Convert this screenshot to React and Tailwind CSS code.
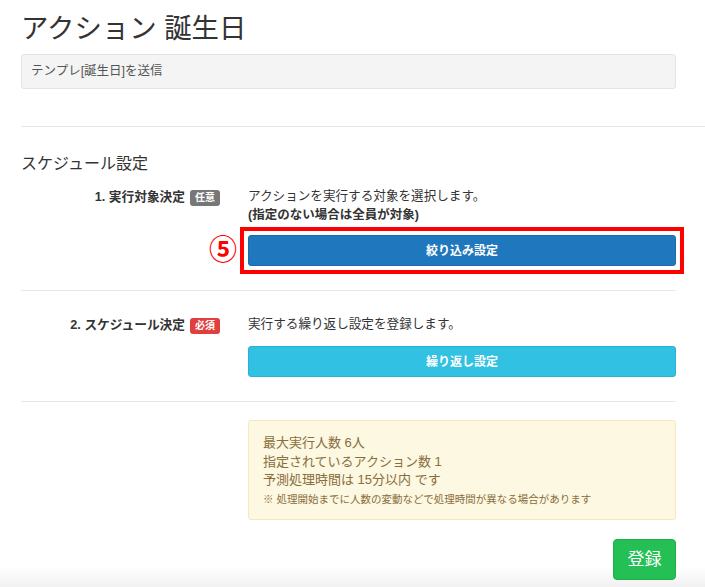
import React from "react";

const font = { fontFamily: '"Liberation Sans", "Noto Sans CJK JP", sans-serif' };

function Badge({ children, tone }) {
  const color = tone === "red" ? "bg-[#e0403d]" : "bg-[#777777]";
  return (
    <span
      className={`${color} ml-[5px] inline-flex h-[16px] items-center rounded-[3px] px-[5px] text-[10px] font-bold leading-none text-white`}
    >
      {children}
    </span>
  );
}

function Row({ label, badge, tone, children }) {
  return (
    <div className="grid grid-cols-[227px_428px]">
      <div className="flex h-[19px] items-center justify-end pr-[28px] pt-[3px] text-[12.7px] font-bold text-[#333]">
        {label}
        <Badge tone={tone}>{badge}</Badge>
      </div>
      <div>{children}</div>
    </div>
  );
}

export default function App() {
  return (
    <div
      style={font}
      className="h-[587px] overflow-hidden bg-[linear-gradient(to_bottom,#ffffff_567px,#f1f1f1_587px)] pl-[21px] text-[#333]"
    >
      {/* ===== HEADER ===== */}
      <h1 className="pt-[11px] text-[27.4px] font-normal leading-[36px] text-[#333]">
        アクション 誕生日
      </h1>
      <div className="mt-[7px] flex h-[35px] w-[655px] items-center rounded-[3px] border border-[#e3e3e3] bg-[#f4f4f4] px-[9px] text-[12.5px] text-[#555]">
        テンプレ[誕生日]を送信
      </div>

      <div className="mt-[37px] border-t border-[#e8e8e8]" />

      {/* ===== SCHEDULE ===== */}
      <h2 className="mt-[25px] text-[16px] font-normal leading-[24px] text-[#333]">
        スケジュール設定
      </h2>

      <div className="mt-[11px]">
        <Row label="1. 実行対象決定" badge="任意">
          <p className="text-[12.6px] leading-[19px] text-[#333]">アクションを実行する対象を選択します。</p>
          <p className="text-[12.5px] font-bold leading-[19px] text-[#333]">(指定のない場合は全員が対象)</p>
          <div className="relative mt-[10px]">
            <button className="flex h-[31px] w-full items-center justify-center rounded-[3px] border border-[#1b6aab] bg-[#1f77bd] text-[12px] font-bold text-white">
              絞り込み設定
            </button>
            <div className="pointer-events-none absolute -inset-[8px] border-[4px] border-[#ff0000]" />
            <span className="absolute right-full top-1/2 mr-[11px] -translate-y-1/2 text-[28px] font-bold leading-none text-[#ff0000]">
              ⑤
            </span>
          </div>
        </Row>
      </div>

      <div className="mt-[24px] w-[655px] border-t border-[#e8e8e8]" />

      <div className="mt-[24px]">
        <Row label="2. スケジュール決定" badge="必須" tone="red">
          <p className="text-[12.6px] leading-[19px] text-[#333]">実行する繰り返し設定を登録します。</p>
          <button className="mt-[12px] flex h-[31px] w-full items-center justify-center rounded-[3px] border border-[#27b3d6] bg-[#31c1e3] text-[12px] font-bold text-white">
            繰り返し設定
          </button>
        </Row>
      </div>

      <div className="mt-[24px] w-[655px] border-t border-[#e8e8e8]" />

      {/* ===== ESTIMATE ===== */}
      <div className="mt-[18px] grid grid-cols-[227px_428px]">
        <div />
        <div className="h-[100px] rounded-[3px] border border-[#f8e6bf] bg-[#fcf8e2] px-[14px] pt-[13px] text-[#8a6d3b]">
          <p className="text-[13px] leading-[18.5px]">最大実行人数 6人</p>
          <p className="text-[13px] leading-[18.5px]">指定されているアクション数 1</p>
          <p className="text-[13px] leading-[18.5px]">予測処理時間は 15分以内 です</p>
          <p className="text-[10.5px] leading-[18px]">※ 処理開始までに人数の変動などで処理時間が異なる場合があります</p>
        </div>
      </div>

      <div className="mt-[19px] flex w-[655px] justify-end">
        <button className="flex h-[41px] w-[63px] items-center justify-center rounded-[4px] border border-[#1fb04b] bg-[#24c055] text-[17px] text-white">
          登録
        </button>
      </div>
    </div>
  );
}
